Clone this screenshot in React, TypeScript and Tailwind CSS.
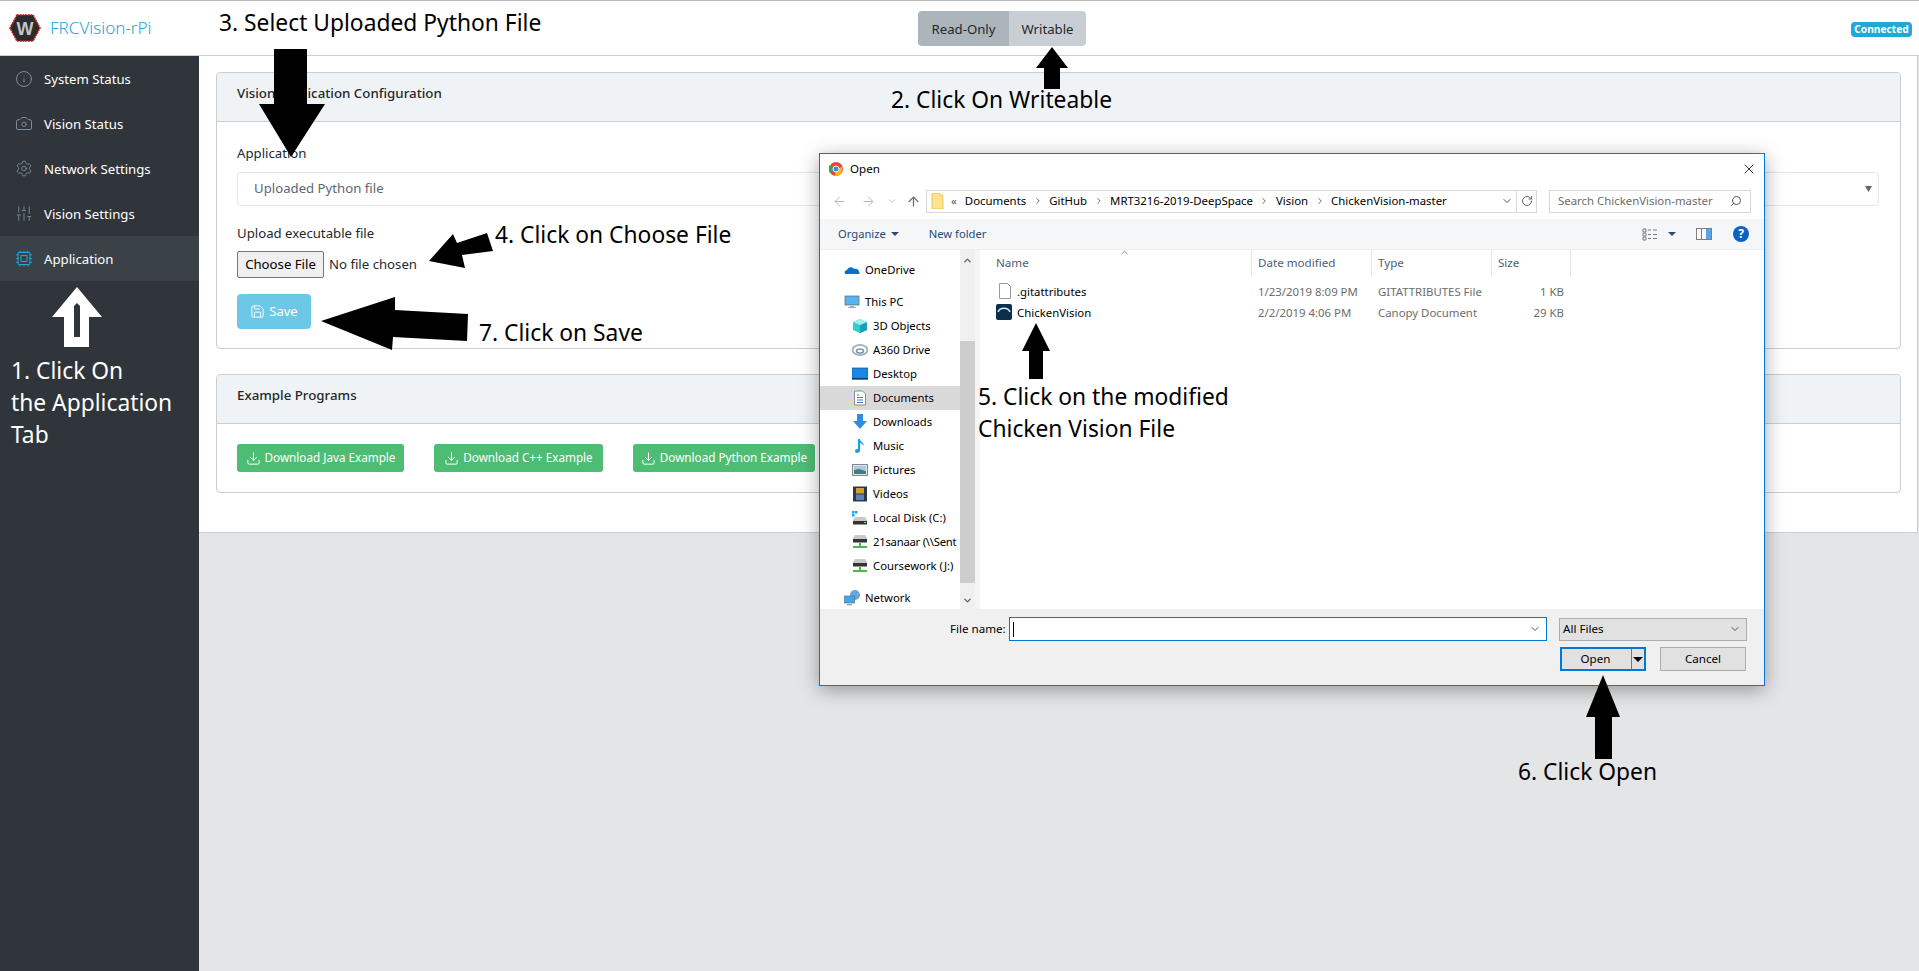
import React from "react";
import { Info, Camera, Settings, SlidersVertical, Cpu, Save, Download, ChevronRight, ChevronDown, ChevronUp, ArrowLeft, ArrowRight, ArrowUp, RotateCw, Search, X } from "lucide-react";

const Nav = ({ icon, label, active }: { icon: React.ReactNode; label: string; active?: boolean }) => (
  <div className={"flex h-[45px] items-center pl-[15px] text-[13.2px] text-white " + (active ? "bg-[#3a4248]" : "")}>
    <span className={"mr-[11px] flex w-[18px] justify-center " + (active ? "text-[#20a8d8]" : "text-[#7f8d9b]")}>{icon}</span>
    <span className="pt-[2px]">{label}</span>
  </div>
);

const Card = ({ title, children, className }: { title: string; children: React.ReactNode; className: string }) => (
  <section className={"rounded-[4px] border border-[#c8ced3] bg-white " + className}>
    <div className="flex h-[49px] items-center rounded-t-[4px] border-b border-[#c8ced3] bg-[#f0f3f5] pb-[6px] pl-[20px] text-[13.3px] font-medium text-[#23282c]">{title}</div>
    {children}
  </section>
);

const GreenBtn = ({ label, w }: { label: string; w: string }) => (
  <div className={"flex h-[28px] items-center justify-center gap-[4px] rounded-[3px] bg-[#4dbd74] text-[11.7px] text-white " + w}>
    <Download size={15} strokeWidth={1.6} />
    {label}
  </div>
);

const Note = ({ className, children }: { className: string; children: React.ReactNode }) => (
  <div className={"absolute whitespace-nowrap text-[22.8px] leading-[32px] " + className}>{children}</div>
);

const TreeRow = ({ icon, label, lvl, sel, tight }: { icon: React.ReactNode; label: string; lvl: 1 | 2; sel?: boolean; tight?: boolean }) => (
  <div className={"flex h-[24px] items-center overflow-hidden whitespace-nowrap text-[11.3px] text-black " + (lvl === 1 ? "pl-[24px]" : "pl-[32px]") + (sel ? " bg-[#d9d9d9]" : "") + (tight ? " tracking-[-0.25px]" : "")}>
    <span className="mr-[5px] flex h-[16px] w-[16px] shrink-0 items-center justify-center">{icon}</span>
    {label}
  </div>
);

const I = {
  cloud: <svg width="16" height="16" viewBox="0 0 16 16"><path d="M1 12c-1-3 1-4 2-4 1-3 5-4 7-1 3-1 5 1 5 3 1 1 1 2 0 2z" fill="#0a6fc9" /></svg>,
  pc: <svg width="16" height="16" viewBox="0 0 16 16"><rect x="1" y="2" width="14" height="9" fill="#5ab4ee" stroke="#567" strokeWidth=".7" /><path d="M6 12h4v1h2v1H4v-1h2z" fill="#9ab" /></svg>,
  cube: <svg width="16" height="16" viewBox="0 0 16 16"><path d="M8 1l7 3v8l-7 3-7-3V4z" fill="#3cc" /><path d="M8 7l7-3v8l-7 3z" fill="#1a9fb5" /><path d="M8 1l7 3-7 3-7-3z" fill="#a5eef0" /></svg>,
  a360: <svg width="16" height="16" viewBox="0 0 16 16"><ellipse cx="8" cy="8" rx="7.5" ry="5" fill="none" stroke="#9fb3c0" strokeWidth="2" /><ellipse cx="8" cy="9" rx="3.5" ry="2" fill="none" stroke="#7b93a5" strokeWidth="1.5" /></svg>,
  desk: <svg width="16" height="16" viewBox="0 0 16 16"><rect x="0" y="2" width="16" height="11" fill="#1b87e0" stroke="#0a4f90" strokeWidth=".7" /><rect x="0" y="12" width="16" height="1.5" fill="#0a3f70" /></svg>,
  docs: <svg width="16" height="16" viewBox="0 0 16 16"><path d="M2.5 1h8l3 3v11h-11z" fill="#fff" stroke="#8a8a8a" /><path d="M5 5h2M5 7.5h6M5 10h6M5 12.5h6" stroke="#3a7cc0" /></svg>,
  down: <svg width="16" height="16" viewBox="0 0 16 16"><path d="M5 0h6v7h4l-7 8-7-8h4z" fill="#2f8de0" /></svg>,
  music: <svg width="16" height="16" viewBox="0 0 16 16"><path d="M6 1h2c0 3 4 3 4 7-1-2-2-2-4-3v8c0 2-5 3-5 0 0-2 2-2 3-2z" fill="#12a0ef" /></svg>,
  pics: <svg width="16" height="16" viewBox="0 0 16 16"><rect x="0.5" y="2.5" width="15" height="11" fill="#dbe7ee" stroke="#888" /><path d="M2 4h12v4H2z" fill="#a6cde8" /><path d="M2 8l5-1 7 2v3H2z" fill="#4a7d72" /></svg>,
  vids: <svg width="16" height="16" viewBox="0 0 16 16"><rect x="1" y="0.5" width="14" height="15" fill="#2a3a4a" /><rect x="4" y="2" width="8" height="5.5" fill="#d0a030" /><rect x="4" y="8.5" width="8" height="5.5" fill="#5a80b8" /></svg>,
  disk: <svg width="16" height="16" viewBox="0 0 16 16"><path d="M0 1h2.5v2.5H0zM3 1h2.5v2.5H3zM0 4h2.5v2.5H0z" fill="#12a5ef" /><path d="M3 7h10l2 3v4H1v-4z" fill="#c9c9c9" /><rect x="1" y="11" width="14" height="3.5" fill="#333" /><rect x="12" y="12" width="2" height="1" fill="#5f5" /></svg>,
  net: <svg width="16" height="16" viewBox="0 0 16 16"><path d="M3 1h10l2 3v4H1V4z" fill="#c9c9c9" /><rect x="1" y="5" width="14" height="3.5" fill="#333" /><path d="M7 9h2v3h6v2H1v-2h6z" fill="#4cb84c" /></svg>,
  network: <svg width="16" height="16" viewBox="0 0 16 16"><circle cx="11" cy="5" r="5" fill="#6aa6d8" /><rect x="0.5" y="6" width="10" height="7" fill="#3fa7ee" stroke="#567" strokeWidth=".6" /><path d="M3 14h5v1.5H3z" fill="#9ab" /></svg>,
};

export default function App() {
  return (
    <div className="relative flex h-[971px] w-[1919px] flex-col overflow-hidden bg-[#e4e5e6] font-['Noto_Sans',sans-serif] text-[#23282c]">
      {/* header */}
      <header className="flex h-[56px] shrink-0 items-center border-y border-t-[#b9b9b9] border-b-[#c8ced3] bg-white">
        <div className="flex w-[199px] items-center pl-[9px]">
          <svg width="32" height="28" viewBox="0 0 32 28">
            <path d="M8 1h16l7 13-7 13H8L1 14z" fill="#2b2b2b" stroke="#b3202a" strokeWidth="1.6" strokeDasharray="2 0.7" />
            <text x="16" y="20.5" textAnchor="middle" fontSize="18" fontWeight="800" fill="#c4c4c4" fontFamily="Liberation Sans">W</text>
          </svg>
          <span className="ml-[9px] text-[17px] font-light text-[#20a8d8]">FRCVision-rPi</span>
        </div>
        <div className="ml-[719px] flex h-[35px] w-[168px] overflow-hidden rounded-[4px] text-[13.2px] text-[#23282c]">
          <div className="flex w-[91px] items-center justify-center bg-[#acb4bc] pt-[3px]">Read-Only</div>
          <div className="flex flex-1 items-center justify-center bg-[#c8ced3] pt-[3px]">Writable</div>
        </div>
        <div className="mt-[3px] ml-[765px] flex h-[15px] w-[61px] items-center justify-center rounded-[4px] bg-[#20a8d8] text-[10.2px] font-bold text-white">Connected</div>
      </header>

      <div className="flex flex-1">
        {/* sidebar */}
        <aside className="w-[199px] shrink-0 bg-[#2f353a]">
          <Nav icon={<Info size={18} strokeWidth={1.3} />} label="System Status" />
          <Nav icon={<Camera size={19} strokeWidth={1.3} />} label="Vision Status" />
          <Nav icon={<Settings size={19} strokeWidth={1.2} />} label="Network Settings" />
          <Nav icon={<SlidersVertical size={19} strokeWidth={1.2} />} label="Vision Settings" />
          <Nav icon={<Cpu size={19} strokeWidth={1.4} />} label="Application" active />
        </aside>

        {/* main */}
        <main className="flex-1">
          <div className="h-[477px] w-[1719px] border-r border-b border-[#c8ced3] bg-white pt-[16px] pr-[16px] pl-[17px]">
            <Card title="Vision Application Configuration" className="h-[277px]">
              <div className="pt-[21px] pr-[21px] pl-[20px]">
                <div className="text-[13.2px] leading-[20px] text-[#23282c]">Application</div>
                <div className="mt-[9px] flex h-[34px] items-center justify-between rounded-[4px] border border-[#e4e7ea] pr-[6px] pl-[16px] text-[13.2px] text-[#5c6873]">
                  Uploaded Python file
                  <svg width="7" height="6" viewBox="0 0 7 6"><path d="M0 0h7L3.500 6z" fill="#5c6873" /></svg>
                </div>
                <div className="mt-[17px] text-[13.2px] leading-[20px]">Upload executable file</div>
                <div className="mt-[8px] flex items-center text-[13.2px]">
                  <div className="flex h-[27px] w-[87px] items-center justify-center rounded-[2px] border border-[#767676] bg-[#efefef] text-black">Choose File</div>
                  <span className="ml-[5px]">No file chosen</span>
                </div>
                <div className="mt-[16px] flex h-[35px] w-[74px] items-center justify-center gap-[4px] rounded-[4px] bg-[#6dc8e7] text-[13px] text-white">
                  <Save size={15} strokeWidth={1.5} />
                  Save
                </div>
              </div>
            </Card>
            <Card title="Example Programs" className="mt-[25px] h-[119px]">
              <div className="flex gap-[30px] pt-[20px] pl-[20px]">
                <GreenBtn label="Download Java Example" w="w-[167px]" />
                <GreenBtn label="Download C++ Example" w="w-[169px]" />
                <GreenBtn label="Download Python Example" w="w-[182px]" />
              </div>
            </Card>
          </div>
        </main>
      </div>

      {/* file dialog */}
      <div className="absolute top-[153px] left-[819px] flex h-[533px] w-[946px] flex-col border border-[#0078d7] bg-white font-['Noto_Sans',sans-serif] shadow-[0_4px_18px_rgba(0,0,0,0.35)]">
        <div className="flex h-[32px] shrink-0 items-center pr-[5px] pb-[3px] pl-[9px] text-[11.6px] text-black">
          <svg width="14" height="14" viewBox="0 0 14 14">
            <circle cx="7" cy="7" r="7" fill="#e8453c" />
            <path d="M7 7L1 11a7 7 0 0 1 0-8z" fill="#34a853" />
            <path d="M7 7l6-2a7 7 0 0 1-7 9z" fill="#fbbc05" />
            <circle cx="7" cy="7" r="3" fill="#4285f4" stroke="#fff" />
          </svg>
          <span className="ml-[7px]">Open</span>
          <X size={16} strokeWidth={1.2} className="mr-[2px] ml-auto text-black" />
        </div>
        <div className="flex h-[30px] shrink-0 items-center text-[#b8b8b8]">
          <ArrowLeft size={15} className="ml-[12px]" strokeWidth={1.6} />
          <ArrowRight size={15} className="ml-[14px]" strokeWidth={1.6} />
          <ChevronDown size={10} className="ml-[11px]" />
          <ArrowUp size={15} className="ml-[9px] text-[#6d6d6d]" strokeWidth={2} />
          <div className="ml-[5px] flex h-[23px] w-[611px] items-center border border-[#d9d9d9] text-[11.4px] text-black">
            <svg width="14" height="16" viewBox="0 0 14 16" className="ml-[4px]"><path d="M1 0h8v2h3v14H1z" fill="#ffe28a" stroke="#d8b64a" strokeWidth=".7" /></svg>
            <span className="ml-[6px] text-[#555]">«</span>
            <span className="ml-[8px]">Documents</span>
            <ChevronRight size={10} className="mx-[6.5px] text-[#555]" />
            <span>GitHub</span>
            <ChevronRight size={10} className="mx-[6.5px] text-[#555]" />
            <span>MRT3216-2019-DeepSpace</span>
            <ChevronRight size={10} className="mx-[6.5px] text-[#555]" />
            <span>Vision</span>
            <ChevronRight size={10} className="mx-[6.5px] text-[#555]" />
            <span>ChickenVision-master</span>
            <ChevronDown size={12} className="mr-[3px] ml-auto text-[#555]" />
            <span className="flex h-full w-[20px] items-center justify-center border-l border-[#d9d9d9]"><RotateCw size={12} className="text-[#666]" /></span>
          </div>
          <div className="ml-[12px] flex h-[23px] w-[202px] items-center justify-between border border-[#d9d9d9] pr-[8px] pl-[8px] text-[11.4px] text-[#6d6d6d]">
            Search ChickenVision-master
            <Search size={12} className="-scale-x-100 text-[#555]" />
          </div>
        </div>
        <div className="mt-[3px] flex h-[30px] shrink-0 items-center bg-[#f5f6f7] text-[11.2px] text-[#2a4a75]">
          <span className="ml-[18px]">Organize</span>
          <svg width="8" height="4" viewBox="0 0 8 4" className="ml-[5px]"><path d="M0 0h8L4 4z" fill="#2a4a75" /></svg>
          <span className="ml-[30px]">New folder</span>
          <svg width="16" height="13" viewBox="0 0 16 13" className="ml-auto"><path d="M1 1h3v3H1zM1 5h3v3H1zM1 9h3v3H1zM6 2h3M11 2h4M6 6.500h3M11 6.500h4M6 10.500h3M11 10.500h4" fill="none" stroke="#7d7d7d" /></svg>
          <svg width="8" height="4" viewBox="0 0 8 4" className="ml-[10px]"><path d="M0 0h8L4 4z" fill="#2a4a75" /></svg>
          <svg width="16" height="12" viewBox="0 0 16 12" className="ml-[20px]"><rect x="0.5" y="0.5" width="15" height="11" fill="#fff" stroke="#7d7d7d" /><rect x="10" y="1" width="5" height="10" fill="#58a6e8" /><rect x="5" y="1" width="1" height="10" fill="#7d7d7d" /></svg>
          <span className="mr-[15px] ml-[21px] flex h-[16px] w-[16px] items-center justify-center rounded-full bg-[#0a63c2] text-[12px] font-bold text-white">?</span>
        </div>
        <div className="flex min-h-0 flex-1 border-t border-[#eee]">
          <div className="w-[140px] shrink-0 overflow-hidden pt-[8px]">
            <TreeRow lvl={1} icon={I.cloud} label="OneDrive" />
            <div className="h-[8px]" />
            <TreeRow lvl={1} icon={I.pc} label="This PC" />
            <TreeRow lvl={2} icon={I.cube} label="3D Objects" />
            <TreeRow lvl={2} icon={I.a360} label="A360 Drive" />
            <TreeRow lvl={2} icon={I.desk} label="Desktop" />
            <TreeRow lvl={2} icon={I.docs} label="Documents" sel />
            <TreeRow lvl={2} icon={I.down} label="Downloads" />
            <TreeRow lvl={2} icon={I.music} label="Music" />
            <TreeRow lvl={2} icon={I.pics} label="Pictures" />
            <TreeRow lvl={2} icon={I.vids} label="Videos" />
            <TreeRow lvl={2} icon={I.disk} label="Local Disk (C:)" />
            <TreeRow lvl={2} icon={I.net} label="21sanaar (\\Sent" tight />
            <TreeRow lvl={2} icon={I.net} label="Coursework (J:)" />
            <div className="h-[8px]" />
            <TreeRow lvl={1} icon={I.network} label="Network" />
          </div>
          <div className="flex w-[15px] shrink-0 flex-col items-center bg-[#f0f0f0]">
            <ChevronUp size={11} strokeWidth={3} className="mt-[5px] text-[#606060]" />
            <div className="mt-[75px] h-[242px] w-full bg-[#cdcdcd]" />
            <ChevronDown size={11} strokeWidth={3} className="mt-[12px] text-[#606060]" />
          </div>
          <div className="relative flex-1 border-l-[5px] border-l-[#f5f5f5]">
            <ChevronUp size={11} className="absolute top-[-3px] left-[139px] text-[#888]" />
            <div className="flex h-[26px] items-center text-[11.6px] text-[#4c607a]">
              <span className="w-[271px] pl-[16px]">Name</span>
              <span className="flex h-full w-[120px] items-center border-l border-[#e5e5e5] pl-[6px]">Date modified</span>
              <span className="flex h-full w-[120px] items-center border-l border-[#e5e5e5] pl-[6px]">Type</span>
              <span className="flex h-full w-[80px] items-center border-x border-[#e5e5e5] pl-[6px]">Size</span>
            </div>
            <div className="mt-[5px] flex h-[21px] items-center text-[11.4px] text-[#6d6d6d]">
              <span className="flex w-[271px] items-center pl-[18px] text-black">
                <svg width="14" height="16" viewBox="0 0 14 16" className="mr-[5px]"><path d="M1.500.5h8l3 3v12h-11z" fill="#fff" stroke="#9a9a9a" /></svg>
                .gitattributes
              </span>
              <span className="w-[120px] pl-[7px]">1/23/2019 8:09 PM</span>
              <span className="w-[120px] pl-[7px]">GITATTRIBUTES File</span>
              <span className="w-[73px] text-right">1 KB</span>
            </div>
            <div className="flex h-[21px] items-center text-[11.4px] text-[#6d6d6d]">
              <span className="flex w-[271px] items-center pl-[16px] text-black">
                <svg width="16" height="16" viewBox="0 0 16 16" className="mr-[5px]"><rect width="16" height="16" rx="2" fill="#0c2f4f" /><path d="M2 8c2-5 10-5 12 0" fill="none" stroke="#dfeaf2" strokeWidth="1.6" /></svg>
                ChickenVision
              </span>
              <span className="w-[120px] pl-[7px]">2/2/2019 4:06 PM</span>
              <span className="w-[120px] pl-[7px]">Canopy Document</span>
              <span className="w-[73px] text-right">29 KB</span>
            </div>
          </div>
        </div>
        <div className="h-[76px] shrink-0 bg-[#f0f0f0] text-[11.6px] text-black">
          <div className="flex items-center pt-[8px]">
            <span className="ml-[130px] w-[53px] text-right whitespace-nowrap">File name:</span>
            <div className="ml-[6px] flex h-[24px] w-[538px] items-center justify-between border border-[#0078d7] bg-white pr-[5px] pl-[3px]">
              <div className="h-[15px] w-[1px] bg-black" />
              <ChevronDown size={12} className="text-[#555]" />
            </div>
            <div className="ml-[12px] flex h-[23px] w-[188px] items-center justify-between border border-[#adadad] bg-[#e1e1e1] pr-[5px] pl-[3px]">
              All Files
              <ChevronDown size={12} className="text-[#555]" />
            </div>
          </div>
          <div className="mt-[6px] flex">
            <div className="ml-[740px] flex h-[24px] w-[86px] items-center border-2 border-[#0078d7] bg-[#e1e1e1]">
              <span className="flex-1 pr-[2px] text-center">Open</span>
              <span className="h-full w-[1px] bg-[#777]" />
              <svg width="10" height="5" viewBox="0 0 10 5" className="mx-[1px]"><path d="M0 0h10L5 5z" fill="#000" /></svg>
            </div>
            <div className="ml-[14px] flex h-[24px] w-[86px] items-center justify-center border border-[#adadad] bg-[#e1e1e1]">Cancel</div>
          </div>
        </div>
      </div>

      {/* annotation arrows */}
      <svg className="pointer-events-none absolute top-0 left-0" width="1919" height="971" viewBox="0 0 1919 971">
        <path d="M274 49h33v55h18l-34 53-32-53h15z" fill="#000" />
        <path d="M1044 89V68h-8l16-21 16 21h-8v21z" fill="#000" />
        <path d="M77 287l25 30H89v30H64v-30H52z" fill="#fff" />
        <path d="M74 337V306l3-3 3 3v31z" fill="#2f353a" />
        <path d="M429 261l24-27 4 9 30-10 6 18-31 4 3 13z" fill="#000" />
        <path d="M321 321l74-24v13l73 4-1 27-74-4-1 13z" fill="#000" />
        <path d="M1036 323l14 28h-7v28h-14v-28h-7z" fill="#000" />
        <path d="M1603 675l17 42h-8v42h-17v-42h-9z" fill="#000" />
      </svg>

      {/* annotation captions */}
      <Note className="top-[7px] left-[219px] text-black">3. Select Uploaded Python File</Note>
      <Note className="top-[84px] left-[891px] text-black">2. Click On Writeable</Note>
      <Note className="top-[219px] left-[495px] text-black">4. Click on Choose File</Note>
      <Note className="top-[317px] left-[479px] text-black">7. Click on Save</Note>
      <Note className="top-[381px] left-[978px] text-black">5. Click on the modified<br />Chicken Vision File</Note>
      <Note className="top-[756px] left-[1518px] text-black">6. Click Open</Note>
      <Note className="top-[355px] left-[11px] text-white">1. Click On<br />the Application<br />Tab</Note>
    </div>
  );
}
